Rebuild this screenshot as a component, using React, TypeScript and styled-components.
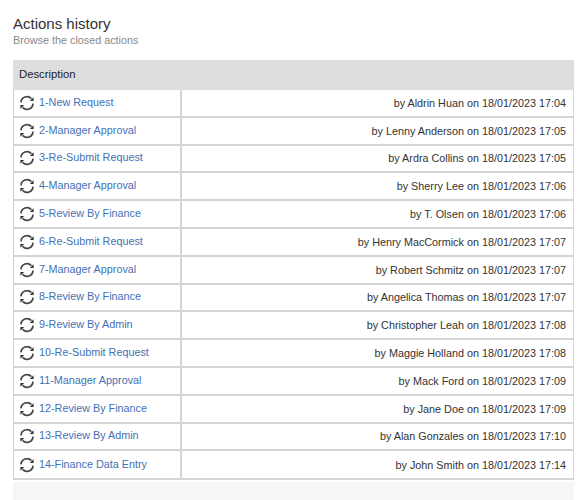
import React from "react";
import styled, { createGlobalStyle } from "styled-components";

const Global = createGlobalStyle`
  html, body { margin: 0; padding: 0; background: #fff; }
  body { font-family: "Liberation Sans", Arial, sans-serif; }
`;

const Page = styled.div`
  width: 586px;
  height: 500px;
  overflow: hidden;
  display: flex;
  flex-direction: column;
  padding: 0 12px 0 13px;
  box-sizing: border-box;
`;

const Heading = styled.div`
  padding-top: 15px;
  height: 60px;
  box-sizing: border-box;
`;

const Title = styled.h2`
  margin: 0;
  font-size: 15px;
  line-height: 18px;
  font-weight: 400;
  color: #333;
`;

const Subtitle = styled.p`
  margin: 1px 0 0;
  font-size: 10.8px;
  line-height: 13px;
  color: #888;
`;

const Table = styled.div`
  display: flex;
  flex-direction: column;
  border-bottom: 2px solid #d4d4d4;
`;

const HeaderRow = styled.div`
  height: 30px;
  line-height: 29px;
  background: #dedede;
  padding-left: 6px;
  font-size: 11.3px;
  color: #222;
`;

const Row = styled.div`
  display: grid;
  grid-template-columns: 168px 1fr;
  height: 27.8px;
  box-sizing: border-box;
  border-left: 1px solid #d0d0d0;
  border-right: 1px solid #d8d8d8;
  border-bottom: 2px solid #d4d4d4;
  &:last-child { border-bottom: 0; height: 26.6px; }
`;

const NameCell = styled.div`
  display: flex;
  align-items: center;
  gap: 4px;
  padding-left: 5px;
  border-right: 2px solid #d4d4d4;
`;

const NameLink = styled.a`
  font-size: 10.8px;
  line-height: 14px;
  color: #4470b5;
  text-decoration: none;
  position: relative;
  top: -1px;
`;

const ByCell = styled.div`
  display: flex;
  align-items: center;
  justify-content: flex-end;
  padding-right: 7px;
  font-size: 10.8px;
  color: #333;
`;

const Footer = styled.div`
  flex: 1;
  margin-top: 2px;
  background: #f6f6f6;
`;

const SyncIcon = () => (
  <svg width="16" height="16" viewBox="0 0 16 16" fill="none" style={{ flexShrink: 0 }}>
    <path d="M2 7.4A6 6 0 0 1 12.4 3.6" stroke="#484848" strokeWidth="1.7" />
    <path d="M14 8.6A6 6 0 0 1 3.6 12.4" stroke="#484848" strokeWidth="1.7" />
    <path d="M14.6 2.2V6H10.8Z" fill="#333" />
    <path d="M1.4 13.8V10H5.2Z" fill="#333" />
  </svg>
);

const rows: [string, string, string][] = [
  ["1-New Request", "Aldrin Huan", "17:04"],
  ["2-Manager Approval", "Lenny Anderson", "17:05"],
  ["3-Re-Submit Request", "Ardra Collins", "17:05"],
  ["4-Manager Approval", "Sherry Lee", "17:06"],
  ["5-Review By Finance", "T. Olsen", "17:06"],
  ["6-Re-Submit Request", "Henry MacCormick", "17:07"],
  ["7-Manager Approval", "Robert Schmitz", "17:07"],
  ["8-Review By Finance", "Angelica Thomas", "17:07"],
  ["9-Review By Admin", "Christopher Leah", "17:08"],
  ["10-Re-Submit Request", "Maggie Holland", "17:08"],
  ["11-Manager Approval", "Mack Ford", "17:09"],
  ["12-Review By Finance", "Jane Doe", "17:09"],
  ["13-Review By Admin", "Alan Gonzales", "17:10"],
  ["14-Finance Data Entry", "John Smith", "17:14"],
];

export default function App() {
  return (
    <Page>
      <Global />
      <Heading>
        <Title>Actions history</Title>
        <Subtitle>Browse the closed actions</Subtitle>
      </Heading>
      <Table>
        <HeaderRow>Description</HeaderRow>
        {rows.map(([name, by, time]) => (
          <Row key={name}>
            <NameCell>
              <SyncIcon />
              <NameLink href="#">{name}</NameLink>
            </NameCell>
            <ByCell>by {by} on 18/01/2023 {time}</ByCell>
          </Row>
        ))}
      </Table>
      <Footer />
    </Page>
  );
}
